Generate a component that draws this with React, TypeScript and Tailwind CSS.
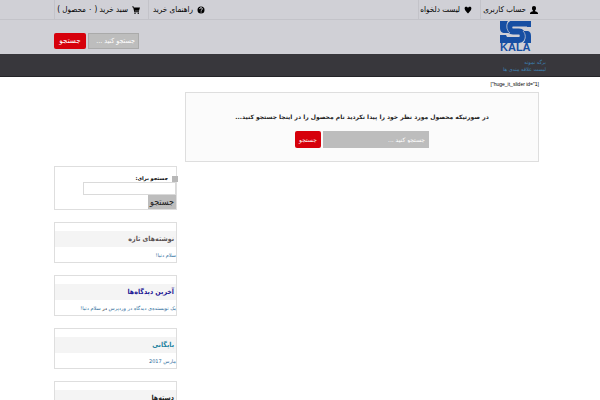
import React from 'react';

interface SearchFormProps {
  label: string;
  className?: string;
  inputClass: string;
  buttonClass: string;
}

const SearchForm: React.FC<SearchFormProps> = ({ label, className = '', inputClass, buttonClass }) => (
  <form role="search" onSubmit={(e) => e.preventDefault()} className={`flex ${className}`}>
    <input
      type="text"
      aria-label={label}
      placeholder="جستجو کنید ..."
      className={`min-w-0 rounded-none bg-[#bdbdbd] text-white placeholder:text-white placeholder:opacity-100 ${inputClass}`}
    />
    <button type="submit" className={`rounded-xs bg-[#d6000b] text-white ${buttonClass}`}>
      جستجو
    </button>
  </form>
);

const UserIcon = () => (
  <svg viewBox="0 0 16 16" className="size-2 shrink-0" fill="currentColor" aria-hidden="true">
    <path d="M8 0C5.400 0 4 1.800 4 4.500c0 2 .8 3.800 2 4.700v1.300c-3 .8-5.500 2-6 3.500V16h16v-2c-.5-1.500-3-2.700-6-3.500V9.200c1.200-.9 2-2.700 2-4.700C12 1.800 10.600 0 8 0z" />
  </svg>
);

const HeartIcon = () => (
  <svg viewBox="0 0 16 16" className="size-2 shrink-0" fill="currentColor" aria-hidden="true">
    <path d="M8 15C5.500 12.500 2 9 1.400 6 .6 2.600 2.500 1.500 4.500 1.500 6 1.500 7.300 2.500 8 4c.7-1.500 2-2.500 3.500-2.500 2 0 3.900 1.100 3.100 4.500C14 9 10.500 12.500 8 15z" />
  </svg>
);

const HelpIcon = () => (
  <svg viewBox="0 0 16 16" className="size-2 shrink-0" aria-hidden="true">
    <circle cx="8" cy="8" r="7" fill="currentColor" />
    <path d="M5.300 6.200C5.300 4.300 6.400 3.400 8 3.400s2.800.9 2.800 2.400C10.800 7.700 8.200 7.600 8.200 9.600M8.200 11v2" fill="none" stroke="#d0d0d6" strokeWidth="2" />
  </svg>
);

const CartIcon = () => (
  <svg viewBox="0 0 16 16" className="size-2 shrink-0" fill="currentColor" aria-hidden="true">
    <path d="M0 1h3.500l.6 2H16l-2 6.500H5.800l.3 1.200H14v1.600H4.700L2.300 2.600H0z" />
    <circle cx="6" cy="14.300" r="1.500" />
    <circle cx="12.500" cy="14.300" r="1.500" />
  </svg>
);

const Logo = () => (
  <svg viewBox="0 0 31 33" className="h-[33px] w-[31px]" fill="#174fa3" role="img" aria-label="S KALA">
    {/* side flags */}
    <path d="M0 0h8C6 2 6 10 9 12H5C1.500 12 0 10 0 7z" />
    <path d="M23 22c3-2 3-10 0-12h3.500c3.500 0 4.500 2 4.500 5v7z" />
    <path d="M0 14h6l1 2H0zM27 0h4v6h-4z" />
    {/* S */}
    <path
      d="M27 2.500H13C8 2.500 8 10.500 13 10.500h6c5 0 5 8.500 0 8.500H0"
      fill="none"
      stroke="#174fa3"
      strokeWidth="6"
    />
    <path d="M9 0C6 3 6 9 10 12M23 10c3 3 3 8 0 11" fill="none" stroke="#d0d0d6" strokeWidth="0.700" />
    <text
      x="0"
      y="30"
      direction="ltr"
      textAnchor="start"
      fontFamily="Liberation Sans, Arial, sans-serif"
      fontWeight="bold"
      fontSize="11"
    >
      KALA
    </text>
  </svg>
);

interface WidgetProps {
  title: string;
  titleClass: string;
  children?: React.ReactNode;
}

const Widget: React.FC<WidgetProps> = ({ title, titleClass, children }) => (
  <section className="border border-[#dedede] pt-2">
    <h3 className={`bg-[#f4f4f4] px-0.5 font-['DejaVu_Sans_Condensed','DejaVu_Sans',sans-serif] text-[7px] leading-4 font-bold ${titleClass}`}>
      {title}
    </h3>
    <div className="h-[15px] pt-1 text-[5px] leading-2 whitespace-nowrap text-[#2b6b9b]">{children}</div>
  </section>
);

export default function App() {
  return (
    <div
      dir="rtl"
      lang="fa"
      className="h-screen overflow-hidden bg-white font-['DejaVu_Sans','Noto_Sans',sans-serif] text-[#222]"
    >
      <header className="bg-[#d0d0d6] font-['DejaVu_Sans_Condensed','DejaVu_Sans',sans-serif]">
        {/* Top links */}
        <div className="border-b border-[#c3c3c9]">
          <nav className="mx-auto flex h-[19px] w-[82%] border-l border-[#c3c3c9] text-[8px] leading-[18px] whitespace-nowrap text-black">
            <a href="#account" className="flex w-[66px] items-center gap-1 border-l border-[#c3c3c9] pr-2">
              <UserIcon />
              حساب کاربری
            </a>
            <a href="#wishlist" className="flex w-[62px] items-center gap-1 border-l border-[#c3c3c9] pr-2">
              <HeartIcon />
              لیست دلخواه
            </a>
            <a href="#help" className="mr-auto flex w-14 items-center gap-1">
              <HelpIcon />
              راهنمای خرید
            </a>
            <a href="#cart" className="flex w-[94px] items-center gap-1 border-r border-[#c3c3c9] pr-2">
              <CartIcon />
              سبد خرید ( ۰ محصول )
            </a>
          </nav>
        </div>

        {/* Logo and search */}
        <div className="mx-auto flex h-[34px] w-[82%] items-start justify-between pt-px pr-[15px]">
          <a href="#home">
            <Logo />
          </a>
          <SearchForm
            label="جستجو در فروشگاه"
            className="mt-3 h-4 gap-0.5 text-[7px]"
            inputClass="w-[51px] border border-[#aaa] px-[3px]"
            buttonClass="w-8 text-[8px]"
          />
        </div>
      </header>

      {/* Menu */}
      <nav className="border-b border-[#242428] bg-[#38373c]">
        <ul className="mx-auto h-[22px] w-[82%] pt-[5px] text-[5px] leading-[7px] text-[#3d82b5]">
          <li><a href="#sample">برگه نمونه</a></li>
          <li><a href="#wishlists">لیست علاقه مندی ها</a></li>
        </ul>
      </nav>

      <div className="mx-auto flex w-[82%] gap-2 pr-[7px]">
        <main className="min-w-0 flex-1">
          <p className="h-[15px] pt-[3px] font-['Liberation_Sans',Arial,sans-serif] text-[5px] leading-2 text-black">
            <bdi dir="ltr">[&quot;huge_it_slider id=&quot;1]</bdi>
          </p>
          <div className="flex h-[70px] flex-col items-center border border-[#dedede] bg-[#fbfbfb] pt-4">
            <p className="text-[6px] leading-4 font-bold whitespace-nowrap">
              در صورتیکه محصول مورد نظر خود را پیدا نکردید نام محصول را در اینجا جستجو کنید...
            </p>
            <SearchForm
              label="جستجوی محصول"
              className="mt-1.5 h-[17px] gap-0.5 text-[6px]"
              inputClass="w-[106px] px-1"
              buttonClass="w-[26px]"
            />
          </div>
        </main>

        <aside className="mt-[89px] flex w-[123px] shrink-0 flex-col gap-3">
          <form
            role="search"
            onSubmit={(e) => e.preventDefault()}
            className="flex h-11 flex-col items-start border border-[#dedede] pt-2"
          >
            <label htmlFor="side-search" className="flex h-[7px] items-center gap-1 text-[5px] leading-[7px] font-bold text-black">
              <span className="-mr-0.5 size-1.5 bg-[#b8b8b8]" />
              جستجو برای:
            </label>
            <input id="side-search" type="text" className="h-[13px] w-[93px] border border-[#dadada] bg-white px-1 text-[8px]" />
            <button
              type="submit"
              className="h-3.5 w-7 bg-[#bdbdbd] font-['DejaVu_Sans_Condensed','DejaVu_Sans',sans-serif] text-[9px] leading-3.5 text-[#222]"
            >
              جستجو
            </button>
          </form>

          <Widget title="نوشته‌های تازه" titleClass="text-[#5a5151]">
            <a href="#hello">سلام دنیا!</a>
          </Widget>
          <Widget title="آخرین دیدگاه‌ها" titleClass="text-[#1d1794]">
            <a href="#commenter">یک نویسنده‌ی دیدگاه در وردپرس</a> <span className="text-black">در</span>{' '}
            <a href="#hello">سلام دنیا!</a>
          </Widget>
          <Widget title="بایگانی" titleClass="text-[#2382a0]">
            <a href="#archive">مارس 2017</a>
          </Widget>
          <Widget title="دسته‌ها" titleClass="text-[#222]" />
        </aside>
      </div>
    </div>
  );
}
